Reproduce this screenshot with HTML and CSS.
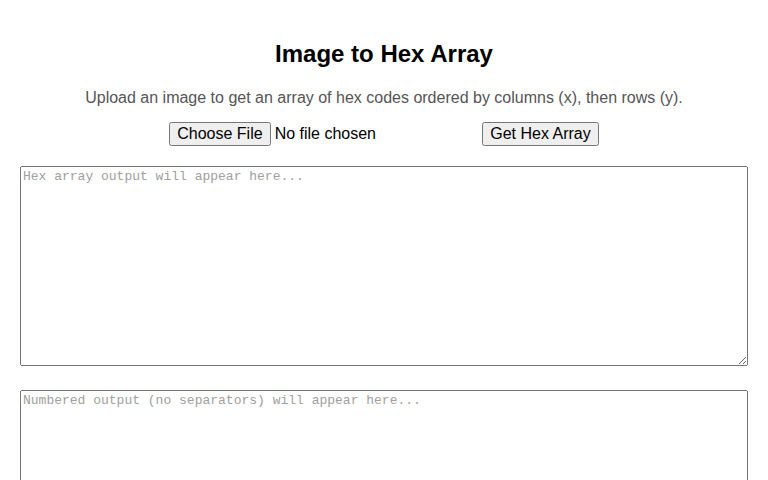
FILE: index.html
```html
<!DOCTYPE html>
<html lang="en">
<head>
    <meta charset="UTF-8">
    <meta name="viewport" content="width=device-width, initial-scale=1.0">
    <title>Image to Hex Array</title>
    <link rel="stylesheet" href="styles.css">
</head>
<body>
    <h1>Image to Hex Array</h1>
    <p class="intro">Upload an image to get an array of hex codes ordered by columns (x), then rows (y).</p>
    <div class="controls">
        <input type="file" id="imageInput" class="file-input" accept="image/*">
        <button id="convertButton" class="convert-button">Get Hex Array</button>
    </div>
    <textarea id="hexOutput" class="output" readonly placeholder="Hex array output will appear here..."></textarea>
    <textarea id="numberedOutput" class="output" readonly placeholder="Numbered output (no separators) will appear here..."></textarea>
</body>
</html>
```

FILE: styles.css
```css
body {
    margin: 0;
    padding: 20px;
    font-family: "Liberation Sans", Arial, sans-serif;
    color: #000;
    background-color: #fff;
}
h1 {
    margin: 20px 0 0;
    font-size: 24px;
    text-align: center;
}
.intro {
    margin: 21px 0 15px;
    font-size: 16px;
    color: #555;
    text-align: center;
}
.controls {
    display: flex;
    justify-content: center;
    align-items: center;
    gap: 10px;
    margin-bottom: 20px;
}
.file-input {
    width: 303px;
    font-family: "Liberation Sans", Arial, sans-serif;
    font-size: 16px;
}
.convert-button {
    font-family: "Liberation Sans", Arial, sans-serif;
    font-size: 16px;
}
.output {
    display: block;
    width: 100%;
    height: 200px;
    box-sizing: border-box;
    margin-bottom: 24px;
    font-family: "Liberation Mono", "Courier New", monospace;
    font-size: 13px;
}
.output::placeholder {
    color: #a0a0a0;
}
```
